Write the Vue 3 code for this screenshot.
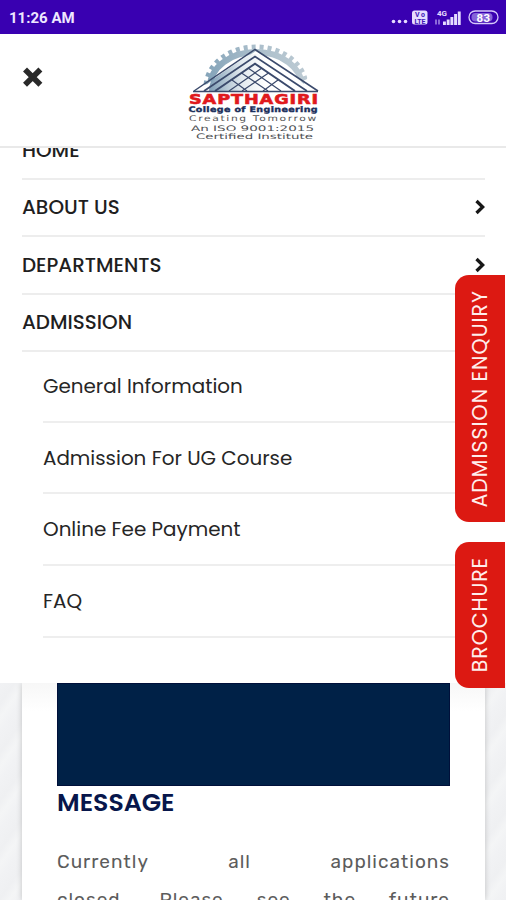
<script setup>
/**
 * College site with the mobile navigation opened
 */

const menuItems = [
  { label: 'HOME' },
  { label: 'ABOUT US', arrow: true },
  { label: 'DEPARTMENTS', arrow: true },
  { label: 'ADMISSION' },
]

const admissionLinks = [
  'General Information',
  'Admission For UG Course',
  'Online Fee Payment',
  'FAQ',
]
</script>

<template>
  <div class="screen">
    <div class="status-bar">
      <span class="clock">11:26 AM</span>
      <svg class="status-icons" width="114" height="20" viewBox="0 0 114 20">
        <g fill="#e6dcff">
          <circle cx="3.500" cy="13.500" r="1.800" />
          <circle cx="9.500" cy="13.500" r="1.800" />
          <circle cx="15.500" cy="13.500" r="1.800" />
          <rect x="22" y="2.500" width="15.500" height="14" rx="2.500" />
          <path d="M53 13.500h2.900V17H53zM56.700 11.500h2.900V17h-2.900zM60.400 9h2.900v8h-2.900zM64.100 6h2.900v11h-2.900zM67.800 3.500h2.900V17h-2.900z" />
          <text x="47" y="7.500" font-size="8" font-weight="700" textLength="10">4G</text>
        </g>
        <g fill="#4015b8" font-size="7" font-weight="700">
          <text x="25" y="9" textLength="10">Vo</text>
          <text x="24.500" y="15.500" textLength="11">LTE</text>
        </g>
        <path d="M46 11.500v5M49 11.500v5" stroke="#b9a2f0" stroke-width="1.300" />
        <rect x="79" y="3" width="29" height="12.500" rx="6.200" fill="none" stroke="#d5c8fa" stroke-width="1.300" />
        <rect x="81.500" y="5" width="21" height="8.500" rx="4" fill="#a78fea" opacity="0.700" />
        <text x="86.500" y="13.500" font-size="11.500" font-weight="700" fill="#fff" textLength="13.500">83</text>
      </svg>
    </div>

    <header class="site-header">
      <button class="close-button" aria-label="Close menu">
        <svg width="20" height="20" viewBox="0 0 20 20">
          <path d="M4 4.400 15.400 15.800M15.400 4.400 4 15.800" stroke="#292929" stroke-width="5.600" stroke-linecap="square" stroke-linejoin="round" />
        </svg>
      </button>
      <svg class="logo" width="136" height="100" viewBox="186 42 136 100">
        <defs>
          <linearGradient id="gear" x1="0" x2="1">
            <stop offset="0" stop-color="#86a5ba" />
            <stop offset="0.450" stop-color="#a9bdca" />
            <stop offset="1" stop-color="#bccad3" />
          </linearGradient>
          <linearGradient id="disc" x1="0" x2="1">
            <stop offset="0" stop-color="#5f86a4" />
            <stop offset="0.350" stop-color="#dde6ec" />
            <stop offset="0.600" stop-color="#fff" />
          </linearGradient>
          <clipPath id="top-half"><path d="M186 42h136v34l-14 1-4 7-48-33-58 39h-12z" /></clipPath>
          <clipPath id="roof"><path d="M194 92 256 50 318 92z" /></clipPath>
        </defs>
        <g clip-path="url(#top-half)">
          <ellipse cx="256" cy="87" rx="46" ry="35" fill="none" stroke="url(#gear)" stroke-width="6" />
          <ellipse cx="256" cy="87" rx="50" ry="40" fill="none" stroke="url(#gear)" stroke-width="5" stroke-dasharray="4 4" />
        </g>
        <ellipse cx="256" cy="92" rx="47" ry="38" fill="url(#disc)" clip-path="url(#roof)" opacity="0.800" />
        <g fill="none" stroke="#3b4a6c">
          <path d="M194 91 255 49.500 318 91" stroke-width="1.500" />
          <path d="M204 91 255 56.500 307 91" stroke-width="1.700" />
          <path d="M215 91 255 63.700 295 91" stroke-width="2" />
          <path d="M241.500 73 268 91M232 80 247 91M248 68 281 91M268.500 73 242 91M278 80 263 91M262 68 229 91" stroke-width="1.200" />
          <path d="M193 91.500H318" stroke-width="1.400" />
        </g>
        <g class="logo-text">
          <text x="189" y="104" class="logo-name" textLength="130" lengthAdjust="spacingAndGlyphs">SAPTHAGIRI</text>
          <text x="188.500" y="112.300" class="logo-college" textLength="129.500" lengthAdjust="spacingAndGlyphs">College of Engineering</text>
          <text x="189" y="121.300" class="logo-motto" textLength="129" lengthAdjust="spacingAndGlyphs">Creating Tomorrow</text>
          <text x="191" y="130.500" class="logo-iso" textLength="123" lengthAdjust="spacingAndGlyphs">An ISO 9001:2015</text>
          <text x="196" y="138.500" class="logo-iso" textLength="117" lengthAdjust="spacingAndGlyphs">Certified Institute</text>
        </g>
      </svg>
    </header>

    <nav class="menu">
      <ul class="menu-list">
        <li v-for="item in menuItems" :key="item.label" class="menu-item">
          <span>{{ item.label }}</span>
          <svg v-if="item.arrow" width="12" height="16" viewBox="0 0 12 16">
            <path d="M3.500 2 9.700 8 3.500 14" fill="none" stroke="#171717" stroke-width="3.300" />
          </svg>
        </li>
      </ul>
      <ul class="submenu">
        <li v-for="link in admissionLinks" :key="link" class="submenu-item">{{ link }}</li>
      </ul>
    </nav>

    <main class="page">
      <section class="card">
        <div class="banner"></div>
        <h2 class="title">MESSAGE</h2>
        <p class="message">
          <span class="line">Currently all applications</span>
          <span class="line">closed. Please see the future</span>
        </p>
      </section>
    </main>

    <aside class="side-tabs">
      <a class="side-tab enquiry"><span>ADMISSION ENQUIRY</span></a>
      <a class="side-tab brochure"><span>BROCHURE</span></a>
    </aside>
  </div>
</template>

<style>
body {
  margin: 0;
  overflow: hidden;
}
</style>

<style scoped>
.screen {
  position: relative;
  display: flex;
  flex-direction: column;
  width: 506px;
  height: 900px;
  overflow: hidden;
  background: #fff;
  font-family: Poppins, Inter, sans-serif;
}

.status-bar {
  display: flex;
  flex: none;
  align-items: center;
  justify-content: space-between;
  box-sizing: border-box;
  height: 34px;
  padding: 1px 2px 0 9px;
  background: #3900b1;
}

.clock {
  color: #eee7ff;
  font: 700 15px/20px Roboto, sans-serif;
}

.status-icons {
  font-family: Roboto, sans-serif;
}

.site-header {
  display: grid;
  flex: none;
  grid-template-columns: 186px 136px;
  align-items: start;
  box-sizing: border-box;
  height: 114px;
  padding-top: 8px;
  border-bottom: 2px solid #e9e9e9;
}

.close-button {
  display: flex;
  width: 20px;
  margin: 25px 0 0 23px;
  padding: 0;
  border: 0;
  background: none;
}

.logo-text {
  font-family: "DejaVu Sans", sans-serif;
}

.logo-name {
  fill: #e0191d;
  stroke: #e0191d;
  stroke-width: 0.6px;
  font-size: 14px;
  font-weight: 700;
  letter-spacing: 0.7px;
}

.logo-college {
  fill: #1b2f5c;
  stroke: #1b2f5c;
  stroke-width: 0.4px;
  font-size: 7.6px;
  font-weight: 700;
  letter-spacing: 0.3px;
}

.logo-motto {
  fill: #555;
  font-size: 7.8px;
  letter-spacing: 1.2px;
}

.logo-iso {
  fill: #505256;
  font-size: 7.6px;
}

/* Painted over the shadow of the card below it */
.menu {
  position: relative;
  z-index: 1;
  flex: none;
  box-sizing: border-box;
  height: 535px;
  overflow: hidden;
  background: #fff;
}

.menu-list,
.submenu {
  margin: 0;
  padding: 0;
  list-style: none;
}

.menu-list {
  margin: -26px 21px 0 22px;
}

.menu-item {
  display: flex;
  align-items: center;
  justify-content: space-between;
  box-sizing: border-box;
  height: 57.5px;
  border-bottom: 2px solid #ededed;
  color: #1f1f1f;
  font-size: 19.9px;
  font-weight: 500;
}

.submenu {
  margin: -1px 21px 0 43px;
}

.submenu-item {
  display: flex;
  align-items: center;
  box-sizing: border-box;
  height: 71.7px;
  border-bottom: 2px solid #eee;
  color: #262626;
  font-size: 19.9px;
}

.page {
  flex: 1;
  min-height: 0;
  padding: 0 21px 0 22px;
  background: repeating-linear-gradient(125deg, #f1f2f4 0, #eff0f2 12px, #f4f5f6 20px, #f1f2f4 28px);
}

.card {
  height: 100%;
  padding: 0 35px;
  background: linear-gradient(#f7f7f7, #fff 28px);
  box-shadow: 0 0 6px rgba(0, 0, 0, 0.2);
}

.banner {
  box-sizing: border-box;
  height: 103px;
  border: 1px solid #00103a;
  background: #002147;
}

.title {
  margin: 0;
  color: #07164b;
  font-size: 25.2px;
  font-weight: 600;
  line-height: 34px;
}

.message {
  margin: 23px 0 0;
  color: #5c5c5c;
  font: 400 19px/38px Rubik, Roboto, sans-serif;
  letter-spacing: 1px;
}

.line {
  display: block;
  text-align-last: justify;
}

.side-tabs {
  position: absolute;
  z-index: 2;
  top: 275px;
  right: 1px;
  display: flex;
  flex-direction: column;
  gap: 20px;
}

.side-tab {
  display: flex;
  align-items: center;
  justify-content: center;
  width: 50px;
  border-radius: 14px 0 0 14px;
  background: #dc1912;
  color: #ffeeec;
  font-size: 20.5px;
  line-height: 24px;
}

.side-tab span {
  writing-mode: vertical-rl;
  transform: rotate(180deg);
  white-space: nowrap;
}

.enquiry {
  height: 247px;
  letter-spacing: 1px;
}

.brochure {
  height: 146px;
  letter-spacing: 0.9px;
}
</style>
